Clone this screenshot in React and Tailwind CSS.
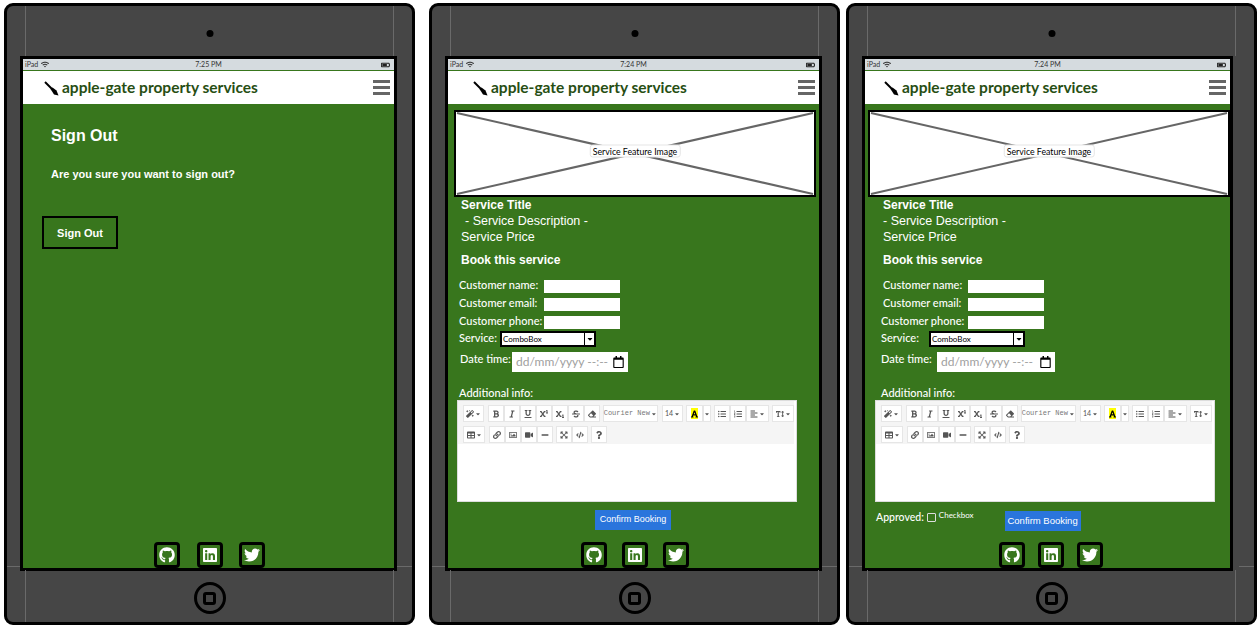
import React from 'react';
import {
  FaGithub, FaLinkedin, FaTwitter, FaMagic, FaBold, FaItalic, FaUnderline, FaSuperscript,
  FaSubscript, FaStrikethrough, FaEraser, FaListUl, FaListOl, FaAlignLeft, FaTextHeight,
  FaTable, FaLink, FaRegImage, FaVideo, FaMinus, FaExpandArrowsAlt, FaCode, FaQuestion,
  FaFont, FaCaretDown, FaWifi, FaBatteryThreeQuarters, FaRegCalendar,
} from 'react-icons/fa';

const Caret = () => <FaCaretDown className="w-[6px] h-[6px]" />;

const ToolBtn = ({ icon: Icon, w = 'w-[16px]', caret, children }) => (
  <div className={`${w} h-[17px] bg-white border border-[#e6e6e6] flex items-center justify-center gap-[1px] text-[#555]`}>
    {Icon && <Icon className="w-[8px] h-[8px]" />}
    {children}
    {caret && <Caret />}
  </div>
);

const Toolbar = () => (
  <div className="bg-[#f5f5f5] h-[43px] w-[336px] pl-[5px] pt-[4px] flex flex-col gap-[4px]">
    <div className="flex items-center">
      <ToolBtn icon={FaMagic} w="w-[22px]" caret />
      <div className="flex ml-[4px]">
        <ToolBtn icon={FaBold} />
        <ToolBtn icon={FaItalic} />
        <ToolBtn icon={FaUnderline} />
        <ToolBtn icon={FaSuperscript} />
        <ToolBtn icon={FaSubscript} />
        <ToolBtn icon={FaStrikethrough} />
        <ToolBtn icon={FaEraser} />
      </div>
      <ToolBtn w="w-[55px] ml-[3px]" caret>
        <span className="font-['Liberation_Mono',monospace] text-[7px] text-[#777] whitespace-nowrap">Courier New</span>
      </ToolBtn>
      <ToolBtn w="w-[23px] ml-[4px]" caret>
        <span className="text-[7px]">14</span>
      </ToolBtn>
      <div className="flex ml-[3px]">
        <ToolBtn w="w-[17px]">
          <span className="bg-[#ffff00] h-[11px] flex items-center"><FaFont className="w-[7px] h-[8px] text-black" /></span>
        </ToolBtn>
        <ToolBtn w="w-[8px]" caret />
      </div>
      <div className="flex ml-[3px]">
        <ToolBtn icon={FaListUl} />
        <ToolBtn icon={FaListOl} />
        <ToolBtn icon={FaAlignLeft} w="w-[23px]" caret />
      </div>
      <ToolBtn icon={FaTextHeight} w="w-[23px] ml-[3px]" caret />
    </div>
    <div className="flex items-center">
      <ToolBtn icon={FaTable} w="w-[22px]" caret />
      <div className="flex ml-[4px]">
        <ToolBtn icon={FaLink} />
        <ToolBtn icon={FaRegImage} />
        <ToolBtn icon={FaVideo} />
        <ToolBtn icon={FaMinus} />
      </div>
      <div className="flex ml-[3px]">
        <ToolBtn icon={FaExpandArrowsAlt} />
        <ToolBtn icon={FaCode} />
      </div>
      <ToolBtn icon={FaQuestion} w="w-[16px] ml-[3px]" />
    </div>
  </div>
);

const Row = ({ label, labelClass, children, rowClass }) => (
  <div className={`flex items-center ${rowClass}`}>
    <span className={`text-[11px] leading-none text-white font-medium whitespace-nowrap ${labelClass}`}>{label}</span>
    {children}
  </div>
);

const TextBox = ({ className }) => <div className={`h-[13px] w-[76px] bg-white ${className}`} />;

const Combo = ({ className }) => (
  <div className={`h-[16px] w-[96px] bg-white border-2 border-black flex items-center ${className}`}>
    <span className="flex-1 pl-[1px] text-[8px] leading-none text-black">ComboBox</span>
    <div className="w-[10px] h-full border-l border-black flex items-center justify-center">
      <FaCaretDown className="w-[8px] h-[8px] text-black" />
    </div>
  </div>
);

const DateBox = ({ className }) => (
  <div className={`h-[20px] bg-white flex items-center justify-between pl-[4px] pr-[4px] ${className}`}>
    <span className="text-[12px] leading-none text-[#a0a0a0] whitespace-nowrap">dd/mm/yyyy --:--</span>
    <FaRegCalendar className="w-[11px] h-[12px] text-black" />
  </div>
);

const ImagePlaceholder = ({ className }) => (
  <div className={`relative h-[87px] shrink-0 bg-white border-2 border-black ${className}`}>
    <svg className="w-full h-full block" viewBox="0 0 358 83" preserveAspectRatio="none">
      <line x1="1" y1="1" x2="357" y2="82" stroke="#666" strokeWidth="2" />
      <line x1="357" y1="1" x2="1" y2="82" stroke="#666" strokeWidth="2" />
    </svg>
    <span className="absolute left-1/2 top-[47%] -translate-x-1/2 -translate-y-1/2 bg-white border border-[#e5e5e5] rounded-[3px] px-[2px] text-[8.75px] leading-[11px] text-black whitespace-nowrap">
      Service Feature Image
    </span>
  </div>
);

const StatusBar = ({ time }) => (
  <div className="h-[12px] shrink-0 bg-[#d5dbdf] border-b border-[#38761d] flex items-center justify-between pl-[2px] pr-[4px] relative">
    <div className="flex items-center gap-[3px] text-[#333]">
      <span className="text-[7px] leading-none">iPad</span>
      <FaWifi className="w-[8px] h-[7px]" />
    </div>
    <span className="absolute left-1/2 -translate-x-1/2 text-[7px] leading-none text-[#333]">{time}</span>
    <FaBatteryThreeQuarters className="w-[9px] h-[8px] text-[#222]" />
  </div>
);

const BrushIcon = () => (
  <svg className="w-[15px] h-[15px] shrink-0" viewBox="0 0 15 15">
    <line x1="1" y1="1" x2="8" y2="8" stroke="#000" strokeWidth="2" />
    <path d="M6.5 8 L8.5 6.5 L12.5 9.5 L14.5 14.5 L10 13.5 Z" fill="#000" />
  </svg>
);

const Header = ({ padClass }) => (
  <div className={`h-[33px] shrink-0 bg-white flex items-center justify-between pr-[4px] ${padClass}`}>
    <div className="flex items-center gap-[3px] pt-[1px]">
      <BrushIcon />
      <span className="font-['Lato',sans-serif] font-bold text-[15.5px] leading-none text-[#274e13] whitespace-nowrap">apple-gate property services</span>
    </div>
    <div className="flex flex-col gap-[3px]">
      <div className="w-[17px] h-[3px] bg-[#666]" />
      <div className="w-[17px] h-[3px] bg-[#666]" />
      <div className="w-[17px] h-[3px] bg-[#666]" />
    </div>
  </div>
);

const SocialLinks = ({ className }) => {
  const box = 'w-[26px] h-[26px] border-[3px] border-black rounded-[4px] flex items-center justify-center text-white';
  return (
    <div className={`flex mt-auto ${className}`}>
      <div className={box}><FaGithub className="w-[16px] h-[16px]" /></div>
      <div className={box}><FaLinkedin className="w-[16px] h-[16px]" /></div>
      <div className={box}><FaTwitter className="w-[16px] h-[16px]" /></div>
    </div>
  );
};

// faint guide lines left over on the bezel of the mockup
const GuideLines = () => (
  <>
    <div className="absolute left-[18px] top-0 w-px h-[50px] bg-[#6a6a6a]" />
    <div className="absolute right-[18px] top-0 w-px h-[50px] bg-[#6a6a6a]" />
    <div className="absolute left-[18px] bottom-0 w-px h-[52px] bg-[#6a6a6a]" />
    <div className="absolute right-[18px] bottom-0 w-px h-[52px] bg-[#6a6a6a]" />
    <div className="absolute left-0 bottom-[55px] w-[13px] h-px bg-[#6a6a6a]" />
    <div className="absolute right-0 bottom-[55px] w-[15px] h-px bg-[#6a6a6a]" />
  </>
);

const Tablet = ({ time, screenClass, headerPad, children }) => (
  <div className="relative w-[411px] h-[622px] bg-[#464646] border-[3px] border-black rounded-[9px] pt-[50px] pl-[13px]">
    <GuideLines />
    <div className="absolute left-1/2 top-[24px] -translate-x-1/2 w-[7px] h-[7px] rounded-full bg-black" />
    <div className={`h-[515px] bg-[#38761d] border-[3px] border-black flex flex-col ${screenClass}`}>
      <StatusBar time={time} />
      <Header padClass={headerPad} />
      {children}
    </div>
    <div className="absolute left-1/2 bottom-[8px] -translate-x-1/2 w-[32px] h-[32px] rounded-full border-[3px] border-black flex items-center justify-center">
      <div className="w-[13px] h-[13px] rounded-[3px] border-[3px] border-black" />
    </div>
  </div>
);

const SignOutContent = () => (
  <div className="flex-1 flex flex-col font-['Liberation_Sans',sans-serif]">
    <h1 className="text-[16px] leading-none font-bold text-white ml-[28px] mt-[24px]">Sign Out</h1>
    <p className="text-[11px] leading-none font-bold text-white ml-[28px] mt-[25px]">Are you sure you want to sign out?</p>
    <div className="ml-[19px] mt-[36px] w-[76px] h-[33px] pt-[1px] border-2 border-black flex items-center justify-center text-[11px] font-bold text-white">
      Sign Out
    </div>
    <SocialLinks className="ml-[131px] gap-[16.5px]" />
  </div>
);

const BookingContent = ({ third }) => (
  <div className="flex-1 flex flex-col text-white font-['Lato',sans-serif]">
    <ImagePlaceholder className={third ? 'mt-[6px] ml-[3px] w-[362px]' : 'mt-[6px] ml-[6px] w-[362px]'} />
    <div className={`font-['Liberation_Sans',sans-serif] ${third ? 'ml-[18px]' : 'ml-[13px]'}`}>
      <h2 className="text-[12px] leading-[16px] font-bold">Service Title</h2>
      <p className={`text-[12.5px] leading-[16px] ${third ? '' : 'ml-[4px]'}`}>- Service Description -</p>
      <p className="text-[12.5px] leading-[16px]">Service Price</p>
      <h2 className="text-[12px] leading-[16px] font-bold mt-[7px]">Book this service</h2>
    </div>
    <div className="flex flex-col mt-[9px]">
      <Row label="Customer name:" labelClass={third ? 'ml-[18px] w-[85px] pb-[3px]' : 'ml-[11px] w-[85px] pb-[3px]'} rowClass="h-[18px]">
        <TextBox />
      </Row>
      <Row label="Customer email:" labelClass={third ? 'ml-[18px] w-[85px] pb-[4px]' : 'ml-[11px] w-[85px] pb-[4px]'} rowClass="h-[18px]">
        <TextBox />
      </Row>
      <Row label="Customer phone:" labelClass={third ? 'ml-[16px] w-[87px] pb-[4px]' : 'ml-[11px] w-[85px] pb-[4px]'} rowClass="h-[18px]">
        <TextBox />
      </Row>
      <Row label="Service:" labelClass={third ? 'ml-[16px] w-[48px] pb-[3px]' : 'ml-[11px] w-[41px] pb-[3px]'} rowClass="h-[16px]">
        <Combo />
      </Row>
      <Row label="Date time:" labelClass={third ? 'ml-[16px] w-[56px] pb-[7px]' : 'ml-[12px] w-[52px] pb-[7px]'} rowClass="h-[20px] mt-[5px]">
        <DateBox className={third ? 'w-[118px]' : 'w-[116px]'} />
      </Row>
    </div>
    <span className={`text-[11px] leading-none font-medium mt-[15px] ${third ? 'ml-[16px]' : 'ml-[11px]'}`}>Additional info:</span>
    <div className={`mt-[2px] w-[340px] h-[102px] shrink-0 bg-white border border-[#ddd] ${third ? 'ml-[10px]' : 'ml-[9px]'}`}>
      <Toolbar />
    </div>
    {third ? (
      <div className="flex items-start ml-[11px] mt-[9px]">
        <span className="text-[10.5px] leading-none font-medium mt-[1px]">Approved:</span>
        <div className="w-[9px] h-[9px] ml-[3px] mt-[2px] border border-[#ddd] bg-[#38761d] rounded-[1px]" />
        <span className="text-[8px] leading-none ml-[3px]">Checkbox</span>
        <div className="ml-[31px] w-[76px] h-[20px] bg-[#2a75dc] flex items-center justify-center text-[9.5px] font-['Liberation_Sans',sans-serif]">Confirm Booking</div>
      </div>
    ) : (
      <div className="ml-[147px] mt-[8px] w-[76px] h-[20px] bg-[#2a75dc] flex items-center justify-center text-[9px] font-['Liberation_Sans',sans-serif]">Confirm Booking</div>
    )}
    <SocialLinks className={third ? 'ml-[134px] gap-[13px]' : 'ml-[133px] gap-[15px]'} />
  </div>
);

export default function App() {
  return (
    <div className="w-[1258px] h-[626px] bg-white flex items-start pt-[3px] pl-[4px] overflow-hidden font-['Lato',sans-serif]">
      <Tablet time="7:25 PM" screenClass="w-[377px]" headerPad="pl-[21px]">
        <SignOutContent />
      </Tablet>
      <div className="ml-[14px]">
        <Tablet time="7:24 PM" screenClass="w-[377px]" headerPad="pl-[25px]">
          <BookingContent />
        </Tablet>
      </div>
      <div className="ml-[6px]">
        <Tablet time="7:24 PM" screenClass="w-[371px]" headerPad="pl-[19px]">
          <BookingContent third />
        </Tablet>
      </div>
    </div>
  );
}
